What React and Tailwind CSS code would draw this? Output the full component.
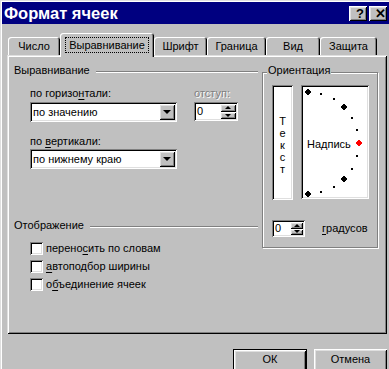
const raised =
  "shadow-[inset_1px_1px_0_#dfdfdf,inset_-1px_-1px_0_#000,inset_2px_2px_0_#fff,inset_-2px_-2px_0_#808080]";
const button =
  "shadow-[inset_1px_1px_0_#fff,inset_-1px_-1px_0_#000,inset_2px_2px_0_#dfdfdf,inset_-2px_-2px_0_#808080]";
const sunken =
  "shadow-[inset_1px_1px_0_#808080,inset_-1px_-1px_0_#fff,inset_2px_2px_0_#000,inset_-2px_-2px_0_#dfdfdf]";

const GroupLine = ({ label, className = "" }) => (
  <div className={`flex h-[13px] items-center ${className}`}>
    <span>{label}</span>
    <div className="ml-[6px] mt-[3px] h-[2px] flex-1 border-t border-b border-t-[#808080] border-b-white" />
  </div>
);

const Select = ({ value, className = "" }) => (
  <div className={`flex h-[20px] w-[147px] items-center bg-white p-[2px] ${sunken} ${className}`}>
    <span className="flex-1 pl-[1px]">{value}</span>
    <div className={`flex h-[16px] w-[16px] items-center justify-center bg-[#c0c0c0] ${button}`}>
      <div className="h-0 w-0 border-x-[4px] border-t-[4px] border-x-transparent border-t-black" />
    </div>
  </div>
);

const Spin = ({ className = "", btn = "w-[16px]" }) => (
  <div className={`flex items-stretch bg-white p-[2px] ${sunken} ${className}`}>
    <span className="flex flex-1 items-center pl-[1px]">0</span>
    <div className={`flex flex-col ${btn}`}>
      <div className={`flex flex-1 items-center justify-center bg-[#c0c0c0] ${button}`}>
        <div className="h-0 w-0 border-x-[3px] border-b-[3px] border-x-transparent border-b-black" />
      </div>
      <div className={`flex flex-1 items-center justify-center bg-[#c0c0c0] ${button}`}>
        <div className="h-0 w-0 border-x-[3px] border-t-[3px] border-x-transparent border-t-black" />
      </div>
    </div>
  </div>
);

const Check = ({ children }) => (
  <div className="flex h-[13px] items-center">
    <div className={`h-[13px] w-[13px] bg-white ${sunken}`} />
    <span className="ml-[3px]">{children}</span>
  </div>
);

const Tab = ({ label, w }) => (
  <div
    className={`flex h-[18px] items-center justify-center rounded-t-[3px] ${w} shadow-[inset_1px_1px_0_#fff,inset_-1px_0_0_#000,inset_-2px_0_0_#808080]`}
  >
    {label}
  </div>
);

const Dial = () => {
  const cx = 7;
  const cy = 58;
  const r = 51;
  const dots = [];
  for (let a = 90; a >= -90; a -= 15) {
    const rad = (a * Math.PI) / 180;
    const x = cx + r * Math.cos(rad);
    const y = cy - r * Math.sin(rad);
    if (a % 45 === 0) {
      const s = 3.5;
      dots.push(
        <polygon
          key={a}
          points={`${x},${y - s} ${x + s},${y} ${x},${y + s} ${x - s},${y}`}
          fill={a === 0 ? "#ff0000" : "#000"}
        />
      );
    } else {
      dots.push(
        <rect key={a} x={Math.round(x) - 1} y={Math.round(y) - 1} width="2" height="2" fill="#000" />
      );
    }
  }
  return (
    <svg className="absolute inset-0" width="68" height="114" shapeRendering="crispEdges">
      {dots}
    </svg>
  );
};

export default function App() {
  return (
    <div className="h-[369px] w-[389px] overflow-hidden bg-[#c0c0c0] font-['Liberation_Sans',Arial,sans-serif] text-[11px] leading-[13px] text-black shadow-[inset_1px_1px_0_#dfdfdf,inset_2px_2px_0_#fff]">
      <div className="pl-[2px] pt-[2px]">
        {/* Title bar */}
        <div className="flex h-[22px] w-[387px] items-center bg-[#000080] pl-[2px] pr-[2px]">
          <span className="text-[16.5px] font-bold leading-[20px] text-white">Формат ячеек</span>
          <div className="ml-auto flex gap-[2px]">
            <div className={`flex h-[15px] w-[18px] items-center justify-center pl-[4px] text-[13px] font-bold leading-[13px] bg-[#c0c0c0] ${button}`}>
              ?
            </div>
            <div className={`flex h-[15px] w-[18px] items-center justify-center pl-[4px] text-[13px] font-bold leading-[13px] bg-[#c0c0c0] ${button}`}>
              ✕
            </div>
          </div>
        </div>

        {/* Tabs */}
        <div className="mt-[9px] flex h-[22px] items-end pl-[6px]">
          <Tab label="Число" w="w-[52px]" />
          <div className="relative z-10 -mb-[2px] flex h-[24px] w-[94px] justify-center rounded-t-[3px] bg-[#c0c0c0] pt-[4px] shadow-[inset_1px_1px_0_#fff,inset_-1px_0_0_#000,inset_-2px_0_0_#808080]">
            <span className="h-[16px] border border-dotted border-black px-[3px] py-[1px] leading-[12px]">
              Выравнивание
            </span>
          </div>
          <Tab label="Шрифт" w="w-[53px]" />
          <Tab label="Граница" w="w-[59px]" />
          <Tab label="Вид" w="w-[54px]" />
          <Tab label="Защита" w="w-[57px]" />
        </div>

        {/* Panel */}
        <div className={`ml-[5px] flex h-[279px] w-[380px] ${raised}`}>
          <div className="ml-[7px] w-[244px] pt-[9px]">
            <GroupLine label="Выравнивание" />
            <div className="ml-[16px] mt-[10px] flex">
              <div className="w-[147px]">
                <div>
                  по горизо<span className="underline underline-offset-[2px]">н</span>тали:
                </div>
                <Select className="mt-[2px]" value="по значению" />
                <div className="mt-[13px]">
                  по <span className="underline underline-offset-[2px]">в</span>ертикали:
                </div>
                <Select className="mt-[1px]" value="по нижнему краю" />
              </div>
              <div className="ml-[17px]">
                <div className="text-[#808080] [text-shadow:1px_1px_0_#fff]">отступ:</div>
                <Spin className="mt-[2px] h-[19px] w-[44px]" btn="w-[16px]" />
              </div>
            </div>

            <GroupLine className="mt-[50px]" label="Отображение" />
            <div className="ml-[16px] mt-[10px] flex flex-col gap-[5px]">
              <Check>
                перено<span className="underline underline-offset-[2px]">с</span>ить по словам
              </Check>
              <Check>
                <span className="underline underline-offset-[2px]">а</span>втоподбор ширины
              </Check>
              <Check>
                о<span className="underline underline-offset-[2px]">б</span>ъединение ячеек
              </Check>
            </div>
          </div>

          {/* Orientation */}
          <div className="relative ml-[4px] mt-[17px] h-[176px] w-[116px] border border-[#808080] pl-[9px] pt-[12px] shadow-[inset_1px_1px_0_#fff,1px_1px_0_#fff]">
            <span className="absolute -top-[9px] left-[4px] bg-[#c0c0c0] px-[1px]">Ориентация</span>
            <div className="flex gap-[8px]">
              <div className={`flex h-[115px] w-[21px] flex-col items-center justify-center bg-white pt-[4px] leading-[12px] ${sunken}`}>
                <span>Т</span>
                <span>е</span>
                <span>к</span>
                <span>с</span>
                <span>т</span>
              </div>
              <div className={`relative h-[114px] w-[68px] bg-white ${sunken}`}>
                <Dial />
                <div className="relative pl-[6px] pt-[53px]">Надпись</div>
              </div>
            </div>
            <div className="mt-[20px] flex items-center">
              <Spin className="h-[17px] w-[33px]" btn="w-[13px]" />
              <span className="ml-[17px]">
                <span className="underline underline-offset-[2px]">г</span>радусов
              </span>
            </div>
          </div>
        </div>

        {/* Buttons */}
        <div className="mt-[15px] flex w-[385px] justify-end gap-[7px]">
          <div className="h-[23px] w-[74px] border border-black">
            <div className={`flex h-full items-start justify-center bg-[#c0c0c0] pt-[3px] ${button}`}>ОК</div>
          </div>
          <div className={`flex h-[23px] w-[73px] items-start justify-center bg-[#c0c0c0] pt-[4px] ${button}`}>
            Отмена
          </div>
        </div>
      </div>
    </div>
  );
}
